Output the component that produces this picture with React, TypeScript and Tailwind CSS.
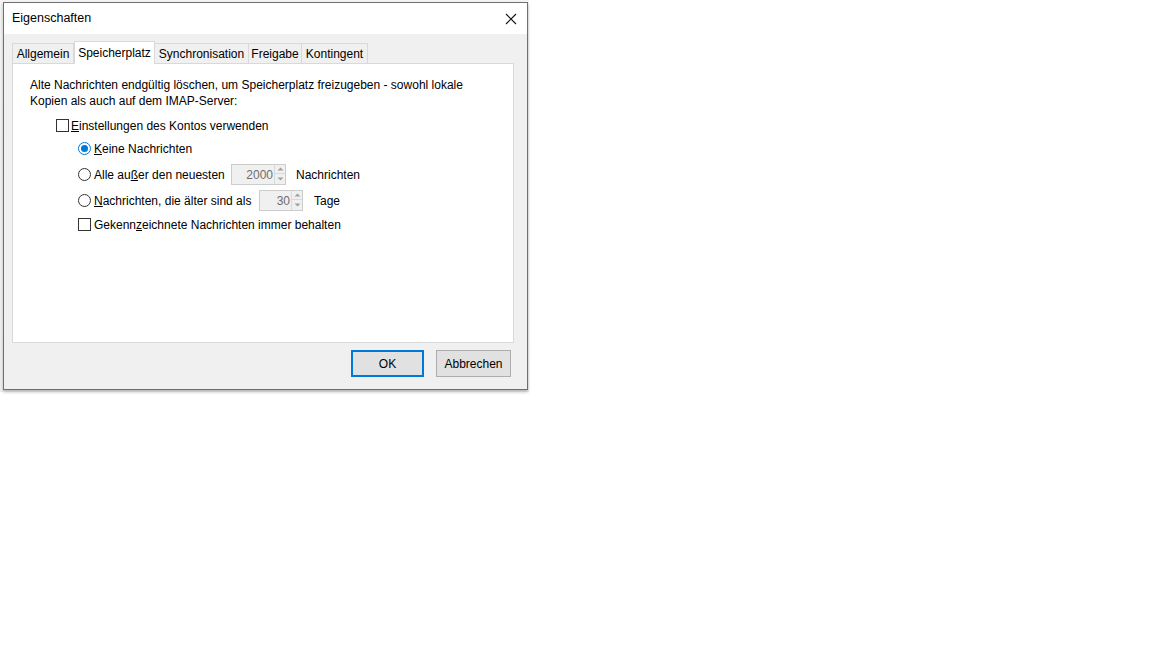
import React from "react";

const font = { fontFamily: '"Liberation Sans", Arial, sans-serif' };

function Radio({ checked }: { checked?: boolean }) {
  return (
    <span
      className={`flex h-[13px] w-[13px] shrink-0 items-center justify-center rounded-full border bg-white ${
        checked ? "border-[#0078d7]" : "border-[#333333]"
      }`}
    >
      {checked && <span className="h-[7px] w-[7px] rounded-full bg-[#0078d7]" />}
    </span>
  );
}

function Check() {
  return <span className="h-[13px] w-[13px] shrink-0 border border-[#333333] bg-white" />;
}

function Spin({ value, width }: { value: string; width: string }) {
  return (
    <div className={`flex h-[21px] ${width} border border-[#cccccc] bg-[#f0f0f0]`}>
      <div className="flex flex-1 items-center justify-end pr-[1px] text-[#6d6d6d]">{value}</div>
      <div className="flex w-[11px] flex-col">
        <div className="flex h-[9px] items-center justify-center border-b border-l border-[#dadada] text-[#a0a0a0]">
          <svg width="7" height="4" viewBox="0 0 7 4"><path d="M0.5 3.5 L3.5 0.5 L6.5 3.5" fill="#a0a0a0" /></svg>
        </div>
        <div className="flex flex-1 items-center justify-center border-l border-[#dadada]">
          <svg width="7" height="4" viewBox="0 0 7 4"><path d="M0.5 0.5 L3.5 3.5 L6.5 0.5" fill="#a0a0a0" /></svg>
        </div>
      </div>
    </div>
  );
}

export default function App() {
  return (
    <div className="h-[648px] w-[1152px] bg-white text-[12px] text-black" style={font}>
      <div className="h-[392px] w-[529px] bg-[linear-gradient(to_bottom,#f4f4f4,#f0f0f0)] pl-[3px] pt-[2px]">
        <div className="flex h-[388px] w-[525px] flex-col border border-[#6f6f6f] bg-[#f0f0f0] shadow-[0_2px_3px_rgba(0,0,0,0.25)]">
          {/* title bar */}
          <div className="flex h-[31px] items-center justify-between bg-white pl-[8px] pr-[10px]">
            <span className="text-[12.5px]">Eigenschaften</span>
            <svg width="12" height="12" viewBox="0 0 12 12">
              <path d="M1 1 L11 11 M11 1 L1 11" stroke="#111" strokeWidth="1.1" />
            </svg>
          </div>
          {/* content */}
          <div className="flex flex-1 flex-col px-[8px]">
            {/* tabs */}
            <div className="mt-[7px] flex h-[22px] items-end">
              <div className="flex h-[20px] w-[62px] items-center justify-center border border-b-0 border-[#d9d9d9]">Allgemein</div>
              <div className="relative z-10 -mb-[1px] flex h-[23px] w-[81px] items-center justify-center border border-b-0 border-[#d9d9d9] bg-white">
                Speicherplatz
              </div>
              <div className="flex h-[20px] w-[94px] items-center justify-center border border-b-0 border-l-0 border-[#d9d9d9]">Synchronisation</div>
              <div className="flex h-[20px] w-[53px] items-center justify-center border border-b-0 border-l-0 border-[#d9d9d9]">Freigabe</div>
              <div className="flex h-[20px] w-[66px] items-center justify-center border border-b-0 border-l-0 border-[#d9d9d9]">Kontingent</div>
            </div>
            <div className="h-[280px] w-[502px] border border-[#d9d9d9] bg-white pl-[17px] pt-[13px]">
              <div className="leading-[16px]">
                Alte Nachrichten endgültig löschen, um Speicherplatz freizugeben - sowohl lokale
                <br />
                Kopien als auch auf dem IMAP-Server:
              </div>
              <div className="mt-[8px] flex flex-col">
                <div className="ml-[26px] flex h-[17px] items-center gap-[2px]">
                  <Check />
                  <span>
                    <u>E</u>instellungen des Kontos verwenden
                  </span>
                </div>
                <div className="ml-[48px] mt-[6px] flex h-[17px] items-center gap-[3px]">
                  <Radio checked />
                  <span>
                    <u>K</u>eine Nachrichten
                  </span>
                </div>
                <div className="ml-[48px] mt-[7px] flex h-[21px] items-center gap-[3px]">
                  <Radio />
                  <span className="w-[134px]">
                    Alle au<u>ß</u>er den neuesten
                  </span>
                  <Spin value="2000" width="w-[55px]" />
                  <span className="ml-[7px]">Nachrichten</span>
                </div>
                <div className="ml-[48px] mt-[5px] flex h-[21px] items-center gap-[3px]">
                  <Radio />
                  <span className="w-[162px]">
                    <u>N</u>achrichten, die älter sind als
                  </span>
                  <Spin value="30" width="w-[44px]" />
                  <span className="ml-[8px]">Tage</span>
                </div>
                <div className="ml-[48px] mt-[5px] flex h-[17px] items-center gap-[3px]">
                  <Check />
                  <span>
                    Gekenn<u>z</u>eichnete Nachrichten immer behalten
                  </span>
                </div>
              </div>
            </div>
            <div className="mt-[7px] flex justify-end gap-[12px] pr-[8px]">
              <button className="h-[27px] w-[73px] border-2 border-[#0078d7] bg-[#e1e1e1]">OK</button>
              <button className="h-[27px] w-[75px] border border-[#adadad] bg-[#e1e1e1]">Abbrechen</button>
            </div>
          </div>
        </div>
      </div>
    </div>
  );
}
